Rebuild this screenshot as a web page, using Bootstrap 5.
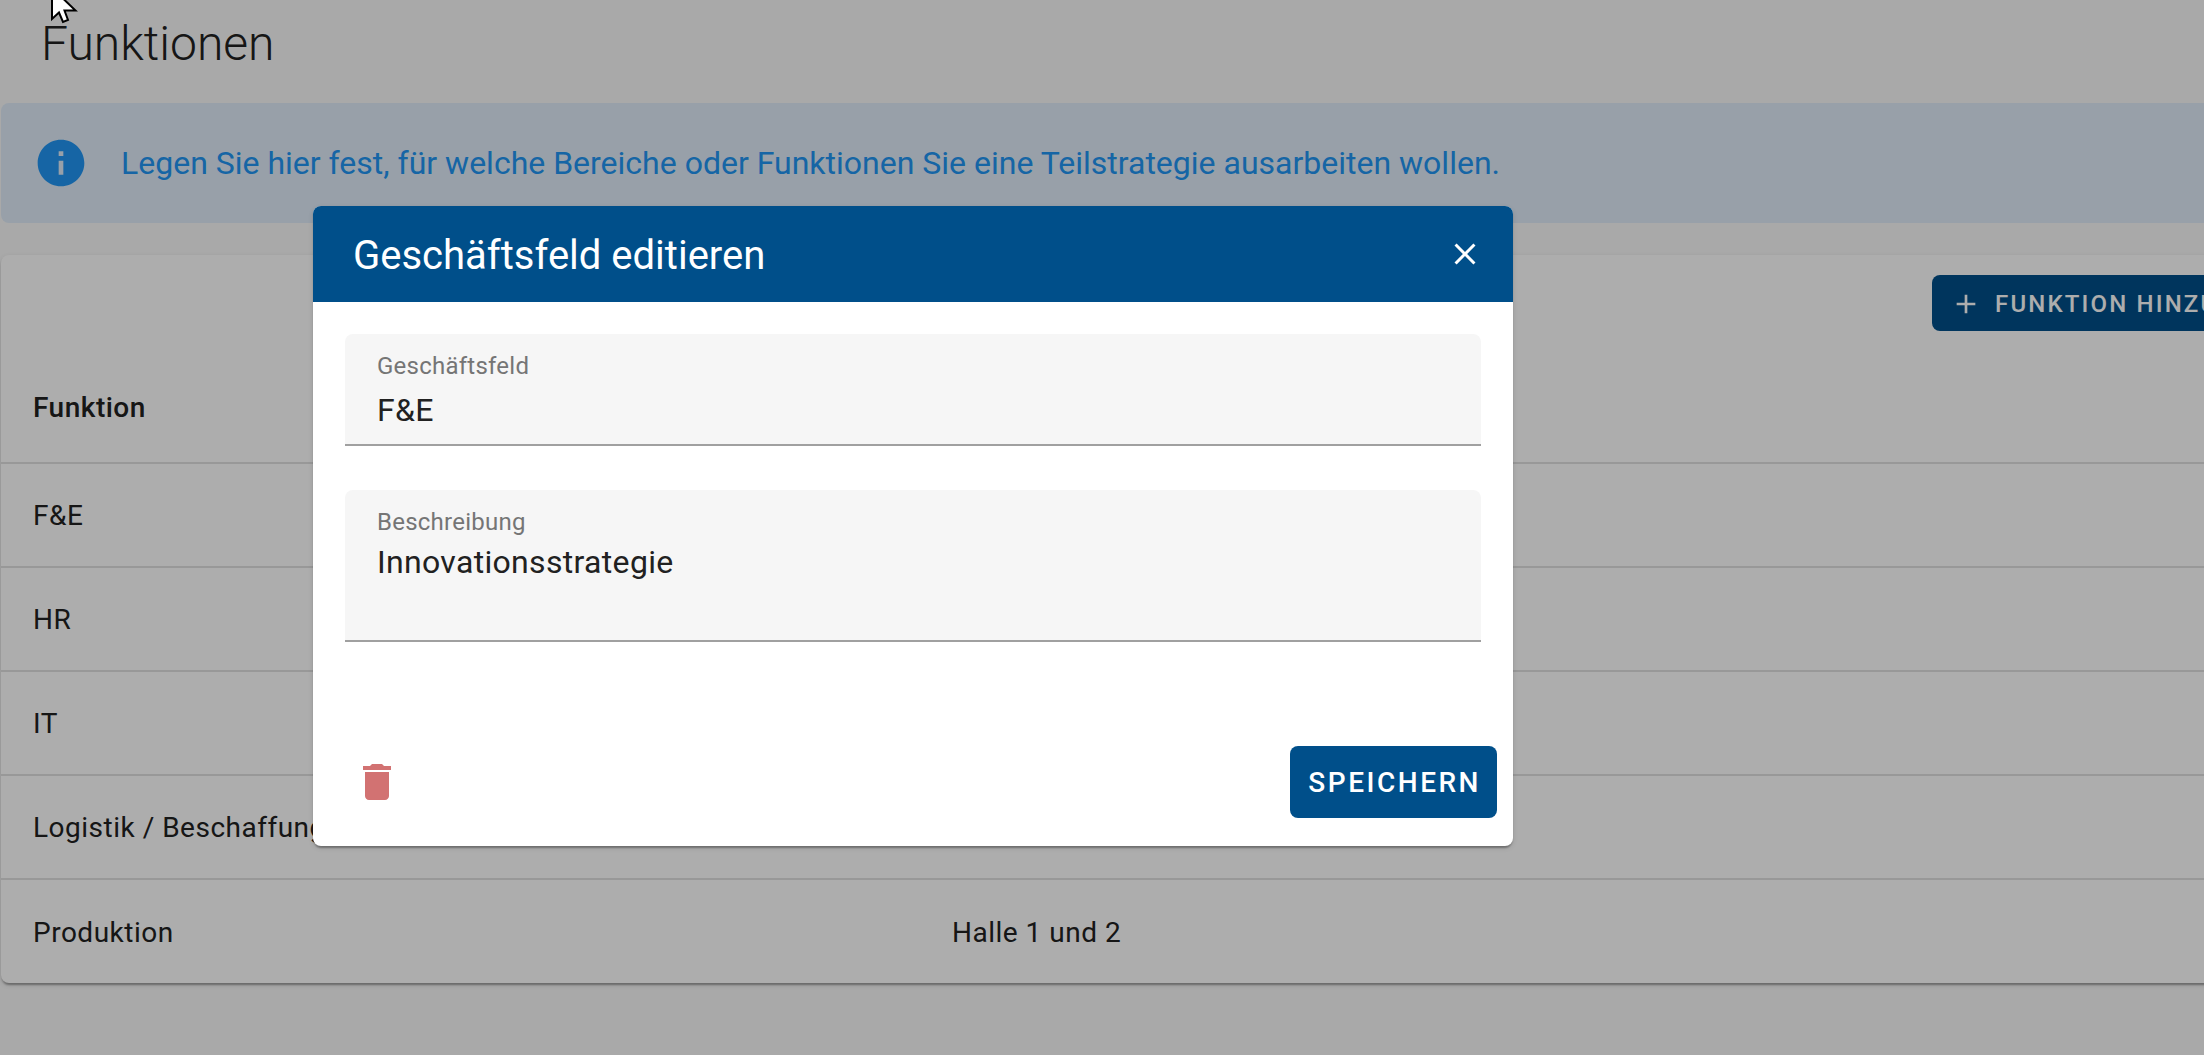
<!DOCTYPE html>
<html lang="de">
<head>
<meta charset="utf-8">
<meta name="viewport" content="width=device-width, initial-scale=1">
<title>Funktionen</title>
<link href="https://cdn.jsdelivr.net/npm/bootstrap@5.3.0/dist/css/bootstrap.min.css" rel="stylesheet">
<style>
  :root { --brand: #004f8a; --ink: #212121; --line: #e0e0e0; --info: #2196f3; }
  body { font-family: Roboto, sans-serif; color: var(--ink); background: #fafafa; overflow: hidden; min-height: 100vh; }
  /* the content area runs past the right edge of the window */
  .content-area { width: calc(100% + 165px); padding-left: 1px; }
  .page-title { font-size: 48px; font-weight: 300; line-height: 64px; padding: 12px 40px 27px; margin: 0; }
  .hint { background: #e0ecf9; color: var(--info); border: 0; border-radius: 8px; font-size: 32px; line-height: 48px; padding: 32px; gap: 32px; margin-bottom: 32px; }
  .hint svg { width: 56px; height: 56px; }
  .panel { border: 0; border-radius: 8px; background: #fff; box-shadow: 0 4px 2px -2px rgba(0,0,0,.2), 0 2px 2px rgba(0,0,0,.14), 0 2px 6px rgba(0,0,0,.12); }
  .panel-tools { padding: 20px 32px 20px; }
  .btn-brand { --bs-btn-color: #fff; --bs-btn-bg: var(--brand); --bs-btn-hover-color: #fff; --bs-btn-hover-bg: #00406f; --bs-btn-active-color: #fff; --bs-btn-active-bg: #00406f; border: 0; border-radius: 8px; font-weight: 500; letter-spacing: 0.09em; text-transform: uppercase; }
  .btn-add { font-size: 24px; height: 56px; padding: 1px 32px 0 18px; gap: 13px; }
  .btn-add svg { width: 32px; height: 32px; }
  .functions { --bs-table-bg: transparent; --bs-table-color: var(--ink); font-size: 28px; line-height: 40px; letter-spacing: 0.5px; margin: 0; table-layout: fixed; }
  .functions th, .functions td { padding: 32px 32px 30px; border-bottom: 2px solid var(--line); height: 104px; }
  .functions th { font-weight: 500; height: 112px; padding-bottom: 34px; }
  .functions tbody tr:last-child td { border-bottom: 0; padding-top: 33px; }
  .functions .col-name { width: 919px; }
  .modal-backdrop { --bs-backdrop-opacity: .32; }
  .modal { padding-right: 378px; }
  .modal-dialog { --bs-modal-width: 1200px; max-width: 1200px; margin-top: 0; margin-bottom: 0; min-height: 100%; padding-bottom: 3px; }
  .modal-content { border: 0; border-radius: 8px; color: var(--ink); box-shadow: 0 4px 2px -2px rgba(0,0,0,.2), 0 2px 2px rgba(0,0,0,.14), 0 2px 6px rgba(0,0,0,.12); }
  .modal-header { background: var(--brand); color: #fff; border: 0; border-radius: 8px 8px 0 0; height: 96px; padding: 0 24px 0 40px; }
  .modal-title { font-size: 40px; line-height: 56px; font-weight: 400; padding-top: 4px; }
  .icon-btn { border: 0; background: none; width: 48px; height: 48px; padding: 6px; color: inherit; display: flex; }
  .icon-btn svg { width: 36px; height: 36px; }
  .modal-body { padding: 32px 32px 88px; gap: 44px; }
  .field { background: #f6f6f6; border-bottom: 2px solid #a0a0a0; border-radius: 8px 8px 0 0; padding: 16px 32px 0; letter-spacing: 0.01em; }
  .field label { color: #757575; font-size: 24px; line-height: 32px; letter-spacing: 0.01em; }
  .field .form-control { background: none; border: 0; border-radius: 0; box-shadow: none; padding: 0; color: var(--ink); font-size: 32px; line-height: 40px; letter-spacing: 0.01em; resize: none; }
  .field input.form-control { height: 62px; padding-bottom: 6px; }
  .field textarea.form-control { height: 102px; padding-top: 4px; }
  .modal-footer { border: 0; padding: 16px 16px 28px 32px; }
  .modal-footer > * { margin: 0; }
  .icon-btn.trash { width: 64px; height: 64px; padding: 8px; color: #d27272; }
  .icon-btn.trash svg { width: 48px; height: 48px; }
  .btn-save { font-size: 28px; height: 72px; padding: 2px 16px 0 18px; }
  .pointer { position: fixed; left: 50px; top: -12px; z-index: 2000; width: 28px; height: 36px; pointer-events: none; }
</style>
<script src="https://cdn.jsdelivr.net/npm/bootstrap@5.3.0/dist/js/bootstrap.bundle.min.js"></script>
</head>
<body>
<main class="content-area">
  <h1 class="page-title">Funktionen</h1>
  <div class="alert hint d-flex align-items-center" role="status">
    <svg viewBox="0 0 24 24" fill="currentColor" aria-hidden="true"><path d="M12 2C6.480 2 2 6.480 2 12s4.480 10 10 10 10-4.480 10-10S17.520 2 12 2zm1 15h-2v-6h2v6zm0-8h-2V7h2v2z"/></svg>
    <span>Legen Sie hier fest, für welche Bereiche oder Funktionen Sie eine Teilstrategie ausarbeiten wollen.</span>
  </div>
  <section class="card panel">
    <div class="panel-tools d-flex justify-content-end">
      <button type="button" class="btn btn-brand btn-add d-flex align-items-center">
        <svg viewBox="0 0 24 24" fill="currentColor" aria-hidden="true"><path d="M19 13h-6v6h-2v-6H5v-2h6V5h2v6h6v2z"/></svg>
        <span>Funktion hinzufügen</span>
      </button>
    </div>
    <table class="table functions">
      <thead><tr><th class="col-name" scope="col">Funktion</th><td></td></tr></thead>
      <tbody>
        <tr><td>F&amp;E</td><td></td></tr>
        <tr><td>HR</td><td></td></tr>
        <tr><td>IT</td><td></td></tr>
        <tr><td>Logistik / Beschaffung</td><td></td></tr>
        <tr><td>Produktion</td><td>Halle 1 und 2</td></tr>
      </tbody>
    </table>
  </section>
</main>

<div class="modal-backdrop show"></div>
<div class="modal d-block" role="dialog" aria-modal="true" aria-labelledby="dlgTitle">
  <div class="modal-dialog modal-dialog-centered">
    <form class="modal-content">
      <div class="modal-header">
        <h2 class="modal-title" id="dlgTitle">Geschäftsfeld editieren</h2>
        <button type="button" class="icon-btn" aria-label="Schließen">
          <svg viewBox="0 0 24 24" fill="currentColor"><path d="M19 6.410L17.590 5 12 10.590 6.410 5 5 6.410 10.590 12 5 17.590 6.410 19 12 13.410 17.590 19 19 17.590 13.410 12z"/></svg>
        </button>
      </div>
      <div class="modal-body d-flex flex-column">
        <div class="field d-flex flex-column">
          <label for="area">Geschäftsfeld</label>
          <input class="form-control" id="area" type="text" value="F&amp;E">
        </div>
        <div class="field d-flex flex-column">
          <label for="desc">Beschreibung</label>
          <textarea class="form-control" id="desc">Innovationsstrategie</textarea>
        </div>
      </div>
      <div class="modal-footer d-flex justify-content-between">
        <button type="button" class="icon-btn trash" aria-label="Löschen">
          <svg viewBox="0 0 24 24" fill="currentColor"><path d="M6 19c0 1.100.9 2 2 2h8c1.100 0 2-.9 2-2V7H6v12zM19 4h-3.500l-1-1h-5l-1 1H5v2h14V4z"/></svg>
        </button>
        <button type="submit" class="btn btn-brand btn-save">Speichern</button>
      </div>
    </form>
  </div>
</div>
<svg class="pointer" viewBox="0 0 28 36" aria-hidden="true"><path d="M2 0V31L9 24.500L13 34L18 32L14.500 22.500H25.500Z" fill="#fff" stroke="#000" stroke-width="2"/></svg>
</body>
</html>
